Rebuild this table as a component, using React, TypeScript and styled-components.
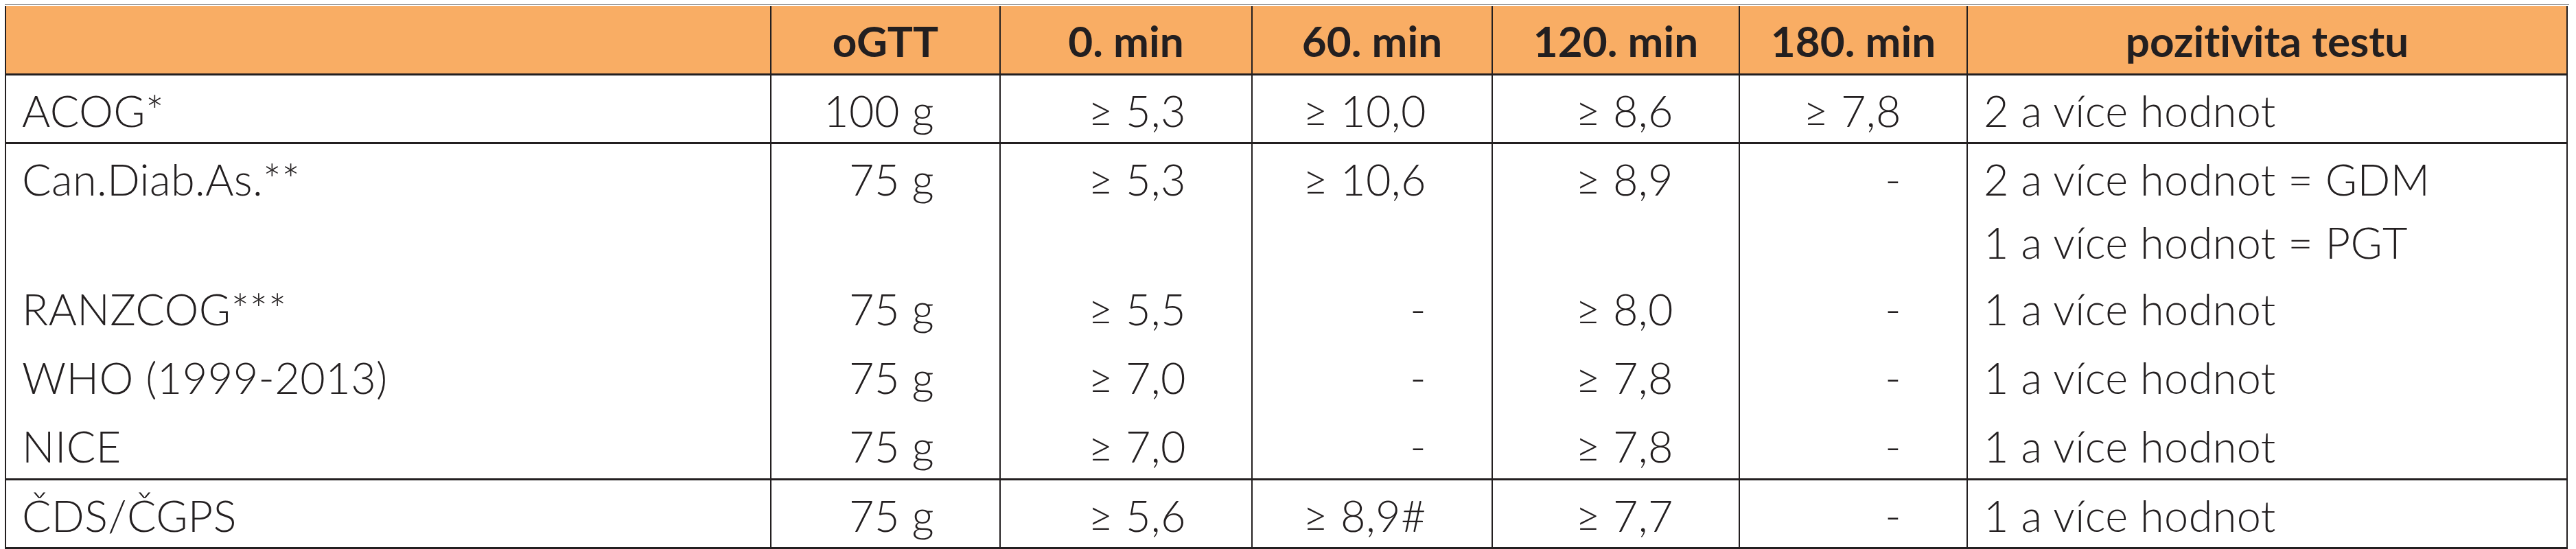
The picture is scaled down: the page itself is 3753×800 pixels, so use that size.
import React from "react";
import styled, { createGlobalStyle } from "styled-components";

const GlobalStyle = createGlobalStyle`
  body {
    margin: 0;
    background: #ffffff;
  }
`;

const Page = styled.div`
  padding: 6px 0 0 11px;
  width: 3753px;
  height: 800px;
  box-sizing: border-box;
`;

const TopRule = styled.div`
  width: 3736px;
  margin-left: -4px;
  border-top: 1px solid #9a9a9a;
  padding-top: 2px;
`;

const Table = styled.table`
  width: 3732px;
  border-collapse: collapse;
  table-layout: fixed;
  font-family: Lato, "Open Sans", "Liberation Sans", sans-serif;
  font-variant-ligatures: none;
  color: #231f20;
`;

const Row = styled.tr<{ $h: number; $divider?: boolean }>`
  height: ${(p) => p.$h}px;
  border-bottom: ${(p) => (p.$divider ? "3px solid #231f20" : "none")};
`;

const HeadCell = styled.th`
  background: #f9ad64;
  border-left: 2px solid #231f20;
  border-right: 2px solid #231f20;
  font-size: 62px;
  font-weight: 700;
  line-height: 92px;
  text-align: center;
  vertical-align: top;
  padding: 4px 0 0;
  white-space: nowrap;
`;

const Cell = styled.td<{ $align?: "left" | "right" }>`
  border-left: 2px solid #231f20;
  border-right: 2px solid #231f20;
  font-size: 63px;
  font-weight: 300;
  letter-spacing: 0.4px;
  line-height: 92px;
  vertical-align: top;
  white-space: nowrap;
  text-align: ${(p) => p.$align ?? "right"};
  padding: ${(p) => (p.$align === "left" ? "5px 0 0 23px" : "5px 95px 0 0")};
`;

const Line = styled.div``;

type DataRow = {
  name: string;
  dose: string;
  values: string[];
  result: string[];
  h: number;
  divider?: boolean;
};

const columns = [1115, 334, 367, 350, 360, 332, 874];
const headers = ["", "oGTT", "0. min", "60. min", "120. min", "180. min", "pozitivita testu"];

const rows: DataRow[] = [
  { name: "ACOG*", dose: "100 g", values: ["≥ 5,3", "≥ 10,0", "≥ 8,6", "≥ 7,8"], result: ["2 a více hodnot"], h: 100, divider: true },
  {
    name: "Can.Diab.As.**",
    dose: "75 g",
    values: ["≥ 5,3", "≥ 10,6", "≥ 8,9", "-"],
    result: ["2 a více hodnot = GDM", "1 a více hodnot = PGT"],
    h: 183,
  },
  { name: "RANZCOG***", dose: "75 g", values: ["≥ 5,5", "-", "≥ 8,0", "-"], result: ["1 a více hodnot"], h: 100 },
  { name: "WHO (1999-2013)", dose: "75 g", values: ["≥ 7,0", "-", "≥ 7,8", "-"], result: ["1 a více hodnot"], h: 100 },
  { name: "NICE", dose: "75 g", values: ["≥ 7,0", "-", "≥ 7,8", "-"], result: ["1 a více hodnot"], h: 100, divider: true },
  { name: "ČDS/ČGPS", dose: "75 g", values: ["≥ 5,6", "≥ 8,9#", "≥ 7,7", "-"], result: ["1 a více hodnot"], h: 100, divider: true },
];

export default function App() {
  return (
    <Page>
      <GlobalStyle />
      <TopRule>
        <Table>
          <colgroup>
            {columns.map((w, i) => (
              <col key={i} style={{ width: w }} />
            ))}
          </colgroup>
          <thead>
            <Row $h={99} $divider>
              {headers.map((h, i) => (
                <HeadCell key={i}>{h}</HeadCell>
              ))}
            </Row>
          </thead>
          <tbody>
            {rows.map((r) => (
              <Row key={r.name} $h={r.h} $divider={r.divider}>
                <Cell $align="left">{r.name}</Cell>
                <Cell>{r.dose}</Cell>
                {r.values.map((v, i) => (
                  <Cell key={i}>{v}</Cell>
                ))}
                <Cell $align="left">
                  {r.result.map((line) => (
                    <Line key={line}>{line}</Line>
                  ))}
                </Cell>
              </Row>
            ))}
          </tbody>
        </Table>
      </TopRule>
    </Page>
  );
}
